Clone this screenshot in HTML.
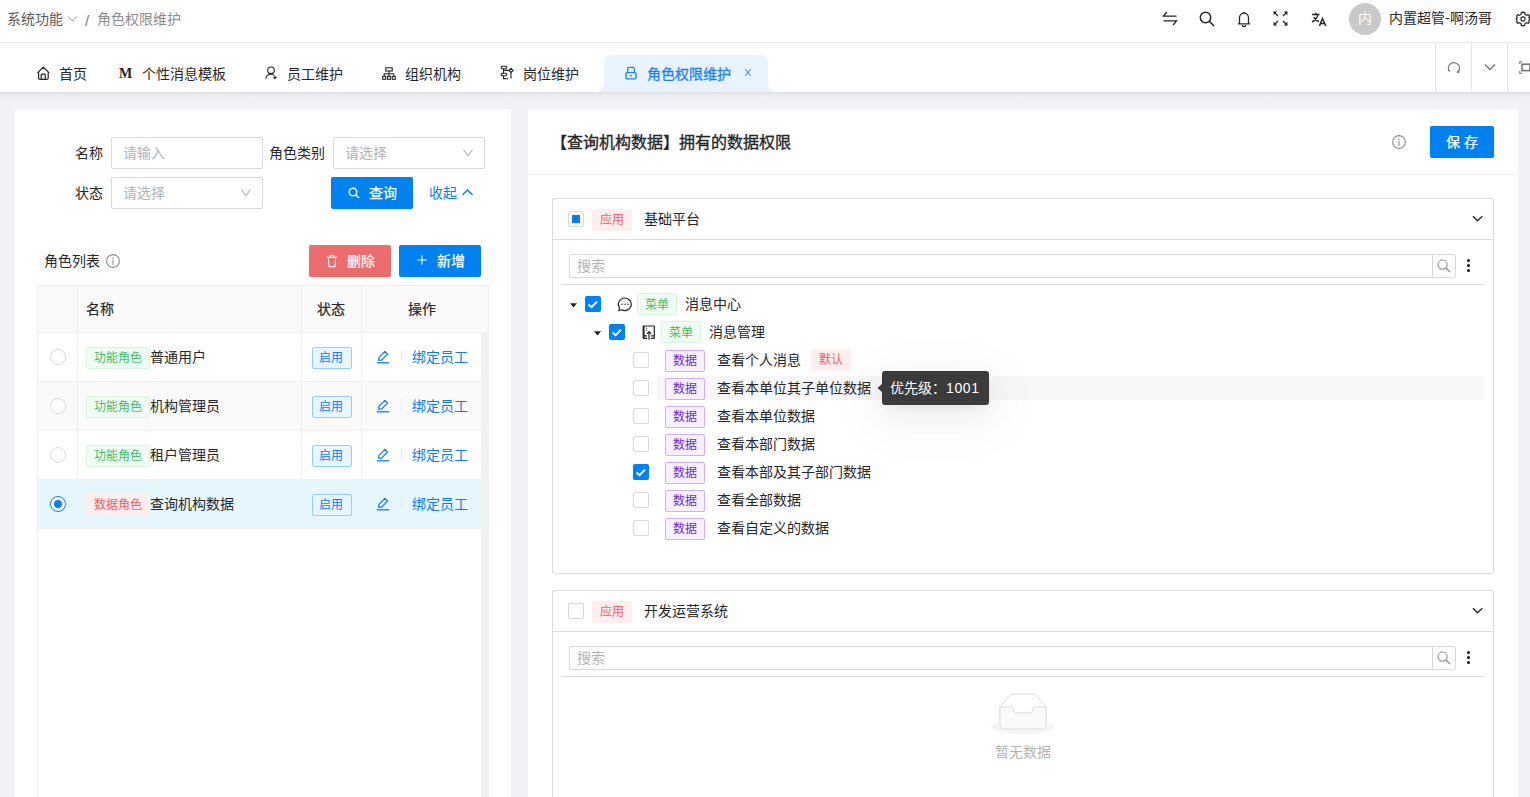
<!DOCTYPE html>
<html lang="zh-CN">
<head>
<meta charset="utf-8">
<style>
*{box-sizing:border-box;margin:0;padding:0}
html,body{width:1530px;height:797px;overflow:hidden}
body{position:relative;background:#f0f2f5;font-family:"Liberation Sans",sans-serif;font-size:14px;color:#262626}
.a{position:absolute}
.t{position:absolute;white-space:nowrap;line-height:20px;height:20px}
svg{display:block}
</style>
</head>
<body>
<!-- HEADER -->
<div class="a" style="left:0;top:0;width:1530px;height:43px;background:#fff;border-bottom:1px solid #ebebeb"></div>
<div class="t" style="left:7px;top:9px;color:#595959">系统功能</div>
<svg class="a" style="left:67px;top:15px" width="11" height="8" viewBox="0 0 11 8"><path d="M1.2 1.5 L5.5 6 L9.8 1.5" fill="none" stroke="#8c8c8c" stroke-width="0.9"/></svg>
<div class="t" style="left:85px;top:11px;color:#7a7a7a;font-size:15px">/</div>
<div class="t" style="left:97px;top:9px;color:#8c8c8c">角色权限维护</div>

<!-- header icons -->
<svg class="a" style="left:1162px;top:11px" width="16" height="15" viewBox="0 0 16 15"><path d="M4.8 1 L1.5 5.2 H14.5 M11.2 14 L14.5 9.8 H1.5" fill="none" stroke="#262626" stroke-width="1.3"/></svg>
<svg class="a" style="left:1199px;top:11px" width="16" height="16" viewBox="0 0 16 16"><circle cx="6.5" cy="6.5" r="5.2" fill="none" stroke="#262626" stroke-width="1.5"/><path d="M10.3 10.3 L15 15" stroke="#262626" stroke-width="1.5"/></svg>
<svg class="a" style="left:1237px;top:11px" width="14" height="16" viewBox="0 0 14 16"><path d="M2.5 12.5 V6.8 A4.5 4.8 0 0 1 11.5 6.8 V12.5 M0.8 12.8 H13.2 M5.3 14 A1.7 1.7 0 0 0 8.7 14" fill="none" stroke="#262626" stroke-width="1.3"/><path d="M7 1 V2" stroke="#262626" stroke-width="1.3"/></svg>
<svg class="a" style="left:1273px;top:11px" width="15" height="15" viewBox="0 0 15 15"><path d="M1 1 L5 5 M14 1 L10 5 M1 14 L5 10 M14 14 L10 10" fill="none" stroke="#262626" stroke-width="1.3"/><path d="M0.6 0.6 H4.2 L0.6 4.2 Z M14.4 0.6 H10.8 L14.4 4.2 Z M0.6 14.4 H4.2 L0.6 10.8 Z M14.4 14.4 H10.8 L14.4 10.8 Z" fill="#262626"/></svg>
<svg class="a" style="left:1311px;top:12px" width="16" height="15" viewBox="0 0 16 15"><path d="M1 2.5 H8.5 M4.8 0.8 V2.5 M7 2.5 C6 6 4 8.5 1 10 M2.8 5 C4 7.5 6 9 8 9.5" fill="none" stroke="#262626" stroke-width="1.4"/><path d="M8.5 14 L11.5 6.5 L14.8 14 M9.6 11.5 H13.6" fill="none" stroke="#262626" stroke-width="1.5"/></svg>
<div class="a" style="left:1349px;top:3px;width:32px;height:32px;border-radius:50%;background:#c8c8c8;color:#fff;text-align:center;line-height:31px;font-size:14px">内</div>
<div class="t" style="left:1389px;top:8px;color:#262626">内置超管-啊汤哥</div>
<svg class="a" style="left:1515px;top:11px" width="16" height="16" viewBox="0 0 16 16"><path d="M8 1.2 L9.6 1.6 L10 3.4 L11.6 4.3 L13.3 3.7 L14.4 5 L13.8 6.7 L14.8 8 L13.8 9.3 L14.4 11 L13.3 12.3 L11.6 11.7 L10 12.6 L9.6 14.4 L8 14.8 L6.4 14.4 L6 12.6 L4.4 11.7 L2.7 12.3 L1.6 11 L2.2 9.3 L1.2 8 L2.2 6.7 L1.6 5 L2.7 3.7 L4.4 4.3 L6 3.4 L6.4 1.6 Z" fill="none" stroke="#262626" stroke-width="1.2"/><circle cx="8" cy="8" r="2.1" fill="none" stroke="#262626" stroke-width="1.1"/></svg>

<!-- TAB BAR -->
<div class="a" style="left:0;top:43px;width:1530px;height:49px;background:#fff"></div>
<div class="a" style="left:0;top:92px;width:1530px;height:6px;background:linear-gradient(#dcdddf,#e6e8eb 40%,#f0f2f5)"></div>

<svg class="a" style="left:36px;top:66px" width="15" height="15" viewBox="0 0 15 15"><path d="M1.4 6.9 L7.3 1.2 L13.2 6.9 M2.6 6 V12.1 Q2.6 13.3 3.8 13.3 H11 Q12.2 13.3 12.2 12.1 V6 M5.2 13.3 V8.9 Q5.2 8.1 6 8.1 H8.5 Q9.3 8.1 9.3 8.9 V13.3" fill="none" stroke="#262626" stroke-width="1.2" stroke-linejoin="round"/></svg>
<div class="t" style="left:59px;top:64px">首页</div>
<div class="t" style="left:119px;top:64px;font-family:'Liberation Serif',serif;font-weight:bold;font-size:14px">M</div>
<div class="t" style="left:142px;top:64px">个性消息模板</div>
<svg class="a" style="left:264px;top:66px" width="14" height="15" viewBox="0 0 14 15"><circle cx="7" cy="4.3" r="3.3" fill="none" stroke="#262626" stroke-width="1.15"/><path d="M1.8 12.6 C2.2 9.6 4.2 8.2 7 8.2 C8.4 8.2 9.6 8.7 10.6 9.7 M11 9.9 V13.2 M9.4 11.6 H12.6" fill="none" stroke="#262626" stroke-width="1.15"/></svg>
<div class="t" style="left:287px;top:64px">员工维护</div>
<svg class="a" style="left:382px;top:67px" width="14" height="13" viewBox="0 0 14 13"><rect x="3.8" y="0.8" width="6.4" height="3.2" fill="none" stroke="#262626" stroke-width="1.1"/><path d="M7 4 V6.8 M2.2 9.5 V6.8 H11.8 V9.5 M7 6.8 V9.5" fill="none" stroke="#262626" stroke-width="1.1"/><rect x="0.7" y="9.4" width="3" height="2.9" fill="none" stroke="#262626" stroke-width="1.1"/><rect x="5.5" y="9.4" width="3" height="2.9" fill="none" stroke="#262626" stroke-width="1.1"/><rect x="10.3" y="9.4" width="3" height="2.9" fill="none" stroke="#262626" stroke-width="1.1"/></svg>
<div class="t" style="left:405px;top:64px">组织机构</div>
<svg class="a" style="left:500px;top:65px" width="15" height="16" viewBox="0 0 15 16"><rect x="1.2" y="1.2" width="5.6" height="2.6" rx="1.2" fill="none" stroke="#262626" stroke-width="1.1"/><rect x="1.2" y="8.2" width="5.6" height="2.6" rx="1.2" fill="none" stroke="#262626" stroke-width="1.1"/><path d="M3.5 3.8 V8.2 M3.5 10.8 V13.6 H6.6 M3.5 5.4 H8.9 M11 7.6 V11.8" fill="none" stroke="#262626" stroke-width="1.1"/><path d="M11 3.3 L13.1 5.4 L11 7.5 L8.9 5.4 Z" fill="none" stroke="#262626" stroke-width="1.1"/><path d="M11 11.4 L12.1 12.6 L11 13.8 L9.9 12.6 Z M7.4 12.5 L8.5 13.6 L7.4 14.7 L6.3 13.6 Z" fill="#555"/></svg>
<div class="t" style="left:523px;top:64px">岗位维护</div>

<!-- active tab -->
<svg class="a" style="left:595px;top:55px" width="182" height="37" viewBox="0 0 182 37"><path d="M0 37 C5 37 9 34 9 28 V8 C9 3.5 12.5 0 17 0 H165 C169.5 0 173 3.5 173 8 V28 C173 34 177 37 182 37 Z" fill="#e8f3fe"/></svg>
<svg class="a" style="left:624px;top:66px" width="14" height="14" viewBox="0 0 14 14"><path d="M3.6 6.6 V3.4 Q3.6 1.3 5.7 1.3 H8.3 Q10.4 1.3 10.4 3.4 V6.6" fill="none" stroke="#1a82f4" stroke-width="1.3"/><rect x="2" y="6.6" width="10" height="6.2" rx="1" fill="none" stroke="#1a82f4" stroke-width="1.3"/><path d="M7 9 V10.6" stroke="#1a82f4" stroke-width="1.6"/></svg>
<div class="t" style="left:647px;top:64px;color:#1a7ff3;-webkit-text-stroke:0.3px currentColor">角色权限维护</div>
<svg class="a" style="left:744px;top:68px" width="8" height="9" viewBox="0 0 8 9"><path d="M1.2 1.2 L6.6 7.9 M6.6 1.2 L1.2 7.9" stroke="#1a82f4" stroke-width="1"/></svg>

<!-- tab bar right tools -->
<div class="a" style="left:1435px;top:43px;width:1px;height:49px;background:#e5e5e5"></div>
<div class="a" style="left:1471px;top:43px;width:1px;height:49px;background:#e5e5e5"></div>
<div class="a" style="left:1507px;top:43px;width:1px;height:49px;background:#e5e5e5"></div>
<svg class="a" style="left:1447px;top:61px" width="14" height="13" viewBox="0 0 14 13"><path d="M2.5 10.5 A5.5 5.5 0 1 1 11.3 10.5" fill="none" stroke="#757575" stroke-width="1.3"/><path d="M9.8 11.2 L11.8 9.3 L12 11.8 Z" fill="#757575" stroke="#757575" stroke-width="0.8"/></svg>
<svg class="a" style="left:1484px;top:63px" width="12" height="8" viewBox="0 0 12 8"><path d="M1 1.5 L6 6.5 L11 1.5" fill="none" stroke="#757575" stroke-width="1.3"/></svg>
<svg class="a" style="left:1519px;top:61px" width="14" height="13" viewBox="0 0 14 13"><path d="M0.8 3 V0.8 H3 M0.8 10 V12.2 H3" fill="none" stroke="#757575" stroke-width="1.1"/><rect x="3" y="3.2" width="8" height="6.4" fill="none" stroke="#757575" stroke-width="1.6"/></svg>

<!-- LEFT PANEL -->
<div class="a" style="left:15px;top:109px;width:496px;height:700px;background:#fff"></div>
<div id="left">
<div class="t" style="left:75px;top:143px">名称</div>
<div class="a" style="left:111px;top:137px;width:152px;height:32px;border:1px solid #d9d9d9;border-radius:2px"></div>
<div class="t" style="left:123px;top:143px;color:#b3b3b3">请输入</div>
<div class="t" style="left:269px;top:143px">角色类别</div>
<div class="a" style="left:333px;top:137px;width:152px;height:32px;border:1px solid #d9d9d9;border-radius:2px"></div>
<div class="t" style="left:345px;top:143px;color:#b3b3b3">请选择</div>
<svg class="a" style="left:462px;top:148px" width="12" height="9" viewBox="0 0 12 9"><path d="M1.5 1.7 L6 7.5 L10.5 1.7" fill="none" stroke="#b3b3b3" stroke-width="1.1"/></svg>
<div class="t" style="left:75px;top:183px">状态</div>
<div class="a" style="left:111px;top:177px;width:152px;height:32px;border:1px solid #d9d9d9;border-radius:2px"></div>
<div class="t" style="left:123px;top:183px;color:#b3b3b3">请选择</div>
<svg class="a" style="left:240px;top:188px" width="12" height="9" viewBox="0 0 12 9"><path d="M1.5 1.7 L6 7.5 L10.5 1.7" fill="none" stroke="#b3b3b3" stroke-width="1.1"/></svg>
<div class="a" style="left:331px;top:177px;width:82px;height:32px;background:#0081f0;border-radius:2px;box-shadow:0 2px 0 rgba(0,0,0,.045)"></div>
<svg class="a" style="left:348px;top:187px" width="12" height="12" viewBox="0 0 12 12"><circle cx="5" cy="5" r="3.8" fill="none" stroke="#fff" stroke-width="1.4"/><path d="M7.8 7.8 L11 11" stroke="#fff" stroke-width="1.4"/></svg>
<div class="t" style="left:369px;top:183px;color:#fff;-webkit-text-stroke:0.25px #fff">查询</div>
<div class="t" style="left:429px;top:183px;color:#0a7ef0">收起</div>
<svg class="a" style="left:461px;top:188px" width="13" height="9" viewBox="0 0 13 9"><path d="M1.5 7 L6.5 2 L11.5 7" fill="none" stroke="#0a7ef0" stroke-width="1.4"/></svg>

<div class="t" style="left:44px;top:251px">角色列表</div>
<svg class="a" style="left:106px;top:254px" width="14" height="14" viewBox="0 0 14 14"><circle cx="7" cy="7" r="6.4" fill="none" stroke="#8c8c8c" stroke-width="1.1"/><circle cx="7" cy="4.2" r="0.8" fill="#8c8c8c"/><path d="M7 6 V10.8" stroke="#8c8c8c" stroke-width="1.1"/></svg>
<div class="a" style="left:309px;top:245px;width:82px;height:32px;background:#ec6b6c;border-radius:2px;box-shadow:0 2px 0 rgba(0,0,0,.045)"></div>
<svg class="a" style="left:326px;top:254px" width="12" height="14" viewBox="0 0 12 14"><path d="M1 3.2 H11 M4.2 3.2 V1.5 H7.8 V3.2 M2.4 3.2 L3 12.6 H9 L9.6 3.2" fill="none" stroke="#fff" stroke-width="1.1" stroke-linejoin="round"/></svg>
<div class="t" style="left:347px;top:251px;color:#fff;-webkit-text-stroke:0.25px #fff">删除</div>
<div class="a" style="left:399px;top:245px;width:82px;height:32px;background:#0081f0;border-radius:2px;box-shadow:0 2px 0 rgba(0,0,0,.045)"></div>
<svg class="a" style="left:416px;top:254px" width="12" height="12" viewBox="0 0 12 12"><path d="M6 1.2 V10.8 M1.2 6 H10.8" stroke="#fff" stroke-width="1.1"/></svg>
<div class="t" style="left:437px;top:251px;color:#fff;-webkit-text-stroke:0.25px #fff">新增</div>

<!-- table -->
<div class="a" style="left:37px;top:285px;width:452px;height:48px;background:#fafafa;border:1px solid #f0f0f0"></div>
<div class="a" style="left:37px;top:332px;width:1px;height:480px;background:#f0f0f0"></div>
<div class="a" style="left:481px;top:333px;width:8px;height:480px;background:#f1f1f1"></div>
<div class="a" style="left:77px;top:285px;width:1px;height:243px;background:#f0f0f0"></div>
<div class="a" style="left:301px;top:285px;width:1px;height:243px;background:#f0f0f0"></div>
<div class="a" style="left:361px;top:285px;width:1px;height:243px;background:#f0f0f0"></div>
<div class="t" style="left:86px;top:299px;-webkit-text-stroke:0.2px currentColor">名称</div>
<div class="t" style="left:317px;top:299px;-webkit-text-stroke:0.2px currentColor">状态</div>
<div class="t" style="left:408px;top:299px;-webkit-text-stroke:0.2px currentColor">操作</div>
<div class="a" style="left:38px;top:333px;width:443px;height:49px;background:#fff;border-bottom:1px solid #f0f0f0"></div>
<div class="a" style="left:77px;top:332px;width:1px;height:49px;background:#f0f0f0"></div>
<div class="a" style="left:301px;top:332px;width:1px;height:49px;background:#f0f0f0"></div>
<div class="a" style="left:361px;top:332px;width:1px;height:49px;background:#f0f0f0"></div>
<div class="a" style="left:50px;top:349px;width:16px;height:16px;border-radius:50%;border:1px solid #d9d9d9;background:#fff"></div>
<div class="a" style="left:86px;top:347px;width:64px;height:22px;border-radius:2px;background:#effcf3;border:1px solid #d5f5df"></div>
<div class="t" style="left:94px;top:348px;font-size:12px;color:#3fbf6a">功能角色</div>
<div class="t" style="left:150px;top:347px">普通用户</div>
<div class="a" style="left:312px;top:347px;width:40px;height:22px;border-radius:2px;background:#e7f6ff;border:1px solid #8fd0ff"></div>
<div class="t" style="left:319px;top:348px;font-size:12px;color:#0a7ef0">启用</div>
<svg class="a" style="left:376px;top:350px" width="14" height="14" viewBox="0 0 14 14"><path d="M2.6 10.2 L2.9 7.4 L8.9 1.4 L11.6 4.1 L5.6 10.1 Z" fill="none" stroke="#0a7ef0" stroke-width="1.3" stroke-linejoin="round"/><path d="M0.8 12.8 H13.2" stroke="#0a7ef0" stroke-width="1.3"/></svg>
<div class="a" style="left:401px;top:350px;width:1px;height:12px;background:#ececec"></div>
<div class="t" style="left:412px;top:347px;color:#0a7ef0">绑定员工</div>
<div class="a" style="left:38px;top:382px;width:443px;height:49px;background:#fafafa;border-bottom:1px solid #f0f0f0"></div>
<div class="a" style="left:77px;top:381px;width:1px;height:49px;background:#f0f0f0"></div>
<div class="a" style="left:301px;top:381px;width:1px;height:49px;background:#f0f0f0"></div>
<div class="a" style="left:361px;top:381px;width:1px;height:49px;background:#f0f0f0"></div>
<div class="a" style="left:50px;top:398px;width:16px;height:16px;border-radius:50%;border:1px solid #d9d9d9;background:#fff"></div>
<div class="a" style="left:86px;top:396px;width:64px;height:22px;border-radius:2px;background:#effcf3;border:1px solid #d5f5df"></div>
<div class="t" style="left:94px;top:397px;font-size:12px;color:#3fbf6a">功能角色</div>
<div class="t" style="left:150px;top:396px">机构管理员</div>
<div class="a" style="left:312px;top:396px;width:40px;height:22px;border-radius:2px;background:#e7f6ff;border:1px solid #8fd0ff"></div>
<div class="t" style="left:319px;top:397px;font-size:12px;color:#0a7ef0">启用</div>
<svg class="a" style="left:376px;top:399px" width="14" height="14" viewBox="0 0 14 14"><path d="M2.6 10.2 L2.9 7.4 L8.9 1.4 L11.6 4.1 L5.6 10.1 Z" fill="none" stroke="#0a7ef0" stroke-width="1.3" stroke-linejoin="round"/><path d="M0.8 12.8 H13.2" stroke="#0a7ef0" stroke-width="1.3"/></svg>
<div class="a" style="left:401px;top:399px;width:1px;height:12px;background:#ececec"></div>
<div class="t" style="left:412px;top:396px;color:#0a7ef0">绑定员工</div>
<div class="a" style="left:38px;top:431px;width:443px;height:49px;background:#fff;border-bottom:1px solid #f0f0f0"></div>
<div class="a" style="left:77px;top:430px;width:1px;height:49px;background:#f0f0f0"></div>
<div class="a" style="left:301px;top:430px;width:1px;height:49px;background:#f0f0f0"></div>
<div class="a" style="left:361px;top:430px;width:1px;height:49px;background:#f0f0f0"></div>
<div class="a" style="left:50px;top:447px;width:16px;height:16px;border-radius:50%;border:1px solid #d9d9d9;background:#fff"></div>
<div class="a" style="left:86px;top:445px;width:64px;height:22px;border-radius:2px;background:#effcf3;border:1px solid #d5f5df"></div>
<div class="t" style="left:94px;top:446px;font-size:12px;color:#3fbf6a">功能角色</div>
<div class="t" style="left:150px;top:445px">租户管理员</div>
<div class="a" style="left:312px;top:445px;width:40px;height:22px;border-radius:2px;background:#e7f6ff;border:1px solid #8fd0ff"></div>
<div class="t" style="left:319px;top:446px;font-size:12px;color:#0a7ef0">启用</div>
<svg class="a" style="left:376px;top:448px" width="14" height="14" viewBox="0 0 14 14"><path d="M2.6 10.2 L2.9 7.4 L8.9 1.4 L11.6 4.1 L5.6 10.1 Z" fill="none" stroke="#0a7ef0" stroke-width="1.3" stroke-linejoin="round"/><path d="M0.8 12.8 H13.2" stroke="#0a7ef0" stroke-width="1.3"/></svg>
<div class="a" style="left:401px;top:448px;width:1px;height:12px;background:#ececec"></div>
<div class="t" style="left:412px;top:445px;color:#0a7ef0">绑定员工</div>
<div class="a" style="left:38px;top:480px;width:443px;height:49px;background:#e6f6fd;border-bottom:1px solid #f0f0f0"></div>
<div class="a" style="left:77px;top:479px;width:1px;height:49px;background:#f0f0f0"></div>
<div class="a" style="left:301px;top:479px;width:1px;height:49px;background:#f0f0f0"></div>
<div class="a" style="left:361px;top:479px;width:1px;height:49px;background:#f0f0f0"></div>
<div class="a" style="left:50px;top:496px;width:16px;height:16px;border-radius:50%;border:1px solid #0081f0;background:#fff"></div>
<div class="a" style="left:54px;top:500px;width:8px;height:8px;border-radius:50%;background:#0081f0"></div>
<div class="a" style="left:86px;top:494px;width:64px;height:22px;border-radius:2px;background:#feeeee"></div>
<div class="t" style="left:94px;top:495px;font-size:12px;color:#eb6262">数据角色</div>
<div class="t" style="left:150px;top:494px">查询机构数据</div>
<div class="a" style="left:312px;top:494px;width:40px;height:22px;border-radius:2px;background:#e7f6ff;border:1px solid #8fd0ff"></div>
<div class="t" style="left:319px;top:495px;font-size:12px;color:#0a7ef0">启用</div>
<svg class="a" style="left:376px;top:497px" width="14" height="14" viewBox="0 0 14 14"><path d="M2.6 10.2 L2.9 7.4 L8.9 1.4 L11.6 4.1 L5.6 10.1 Z" fill="none" stroke="#0a7ef0" stroke-width="1.3" stroke-linejoin="round"/><path d="M0.8 12.8 H13.2" stroke="#0a7ef0" stroke-width="1.3"/></svg>
<div class="a" style="left:401px;top:497px;width:1px;height:12px;background:#ececec"></div>
<div class="t" style="left:412px;top:494px;color:#0a7ef0">绑定员工</div>
</div>

<!-- RIGHT PANEL -->
<div class="a" style="left:528px;top:109px;width:990px;height:700px;background:#fff"></div>
<div id="right">
<div class="t" style="left:551px;top:132px;font-size:16px;line-height:22px;height:22px;-webkit-text-stroke:0.35px currentColor">【查询机构数据】拥有的数据权限</div>
<svg class="a" style="left:1392px;top:135px" width="14" height="14" viewBox="0 0 14 14"><circle cx="7" cy="7" r="6.4" fill="none" stroke="#8c8c8c" stroke-width="1.1"/><circle cx="7" cy="4.2" r="0.8" fill="#8c8c8c"/><path d="M7 6 V10.8" stroke="#8c8c8c" stroke-width="1.1"/></svg>
<div class="a" style="left:1430px;top:126px;width:64px;height:32px;background:#0081f0;border-radius:2px;box-shadow:0 2px 0 rgba(0,0,0,.04)"></div>
<div class="t" style="left:1446px;top:132px;color:#fff;letter-spacing:4px;-webkit-text-stroke:0.25px #fff">保存</div>
<div class="a" style="left:528px;top:174px;width:990px;height:1px;background:#eeeeee"></div>
<div class="a" style="left:552px;top:198px;width:942px;height:376px;border:1px solid #dcdcdc;border-radius:2px"></div>
<div class="a" style="left:552px;top:198px;width:942px;height:42px;border:1px solid #dcdcdc;border-radius:2px 2px 0 0"></div>
<div class="a" style="left:568px;top:211px;width:16px;height:16px;border:1px solid #d9d9d9;border-radius:2px;background:#fff"></div>
<div class="a" style="left:572px;top:215px;width:8px;height:8px;background:#0081f0"></div>
<div class="a" style="left:592px;top:209px;width:40px;height:22px;border-radius:2px;background:#feeeee"></div>
<div class="t" style="left:600px;top:210px;font-size:12px;color:#eb6262">应用</div>
<div class="t" style="left:644px;top:209px">基础平台</div>
<svg class="a" style="left:1471px;top:215px" width="13" height="8" viewBox="0 0 13 8"><path d="M2 1.3 L6.4 5.8 L11.4 1.3" fill="none" stroke="#262626" stroke-width="1.4"/></svg>
<div class="a" style="left:569px;top:254px;width:887px;height:24px;border:1px solid #d9d9d9;border-radius:2px"></div>
<div class="a" style="left:1432px;top:254px;width:1px;height:24px;background:#d9d9d9"></div>
<div class="t" style="left:577px;top:256px;color:#b3b3b3">搜索</div>
<svg class="a" style="left:1437px;top:259px" width="14" height="14" viewBox="0 0 14 14"><circle cx="5.6" cy="5.6" r="4.6" fill="none" stroke="#8c8c8c" stroke-width="1.1"/><path d="M9 9 L13 13" stroke="#8c8c8c" stroke-width="1.2"/></svg>
<div class="a" style="left:1467px;top:259px;width:3.4px;height:3.4px;border-radius:50%;background:#111"></div>
<div class="a" style="left:1467px;top:264px;width:3.4px;height:3.4px;border-radius:50%;background:#111"></div>
<div class="a" style="left:1467px;top:269px;width:3.4px;height:3.4px;border-radius:50%;background:#111"></div>
<div class="a" style="left:561px;top:284px;width:924px;height:1px;background:#dcdcdc"></div>
<div class="a" style="left:552px;top:590px;width:942px;height:240px;border:1px solid #dcdcdc;border-radius:2px"></div>
<div class="a" style="left:552px;top:590px;width:942px;height:42px;border:1px solid #dcdcdc;border-radius:2px 2px 0 0"></div>
<div class="a" style="left:568px;top:603px;width:16px;height:16px;border:1px solid #d9d9d9;border-radius:2px;background:#fff"></div>
<div class="a" style="left:592px;top:601px;width:40px;height:22px;border-radius:2px;background:#feeeee"></div>
<div class="t" style="left:600px;top:602px;font-size:12px;color:#eb6262">应用</div>
<div class="t" style="left:644px;top:601px">开发运营系统</div>
<svg class="a" style="left:1471px;top:607px" width="13" height="8" viewBox="0 0 13 8"><path d="M2 1.3 L6.4 5.8 L11.4 1.3" fill="none" stroke="#262626" stroke-width="1.4"/></svg>
<div class="a" style="left:569px;top:646px;width:887px;height:24px;border:1px solid #d9d9d9;border-radius:2px"></div>
<div class="a" style="left:1432px;top:646px;width:1px;height:24px;background:#d9d9d9"></div>
<div class="t" style="left:577px;top:648px;color:#b3b3b3">搜索</div>
<svg class="a" style="left:1437px;top:651px" width="14" height="14" viewBox="0 0 14 14"><circle cx="5.6" cy="5.6" r="4.6" fill="none" stroke="#8c8c8c" stroke-width="1.1"/><path d="M9 9 L13 13" stroke="#8c8c8c" stroke-width="1.2"/></svg>
<div class="a" style="left:1467px;top:651px;width:3.4px;height:3.4px;border-radius:50%;background:#111"></div>
<div class="a" style="left:1467px;top:656px;width:3.4px;height:3.4px;border-radius:50%;background:#111"></div>
<div class="a" style="left:1467px;top:661px;width:3.4px;height:3.4px;border-radius:50%;background:#111"></div>
<div class="a" style="left:561px;top:676px;width:924px;height:1px;background:#dcdcdc"></div>
<svg class="a" style="left:570px;top:303px" width="7" height="5" viewBox="0 0 7 5"><path d="M0 0.2 H7 L3.5 4.6 Z" fill="#262626"/></svg>
<div class="a" style="left:585px;top:296px;width:16px;height:16px;border-radius:2px;background:#0081f0"></div><svg class="a" style="left:585px;top:296px" width="16" height="16" viewBox="0 0 16 16"><path d="M3.6 8.4 L6.6 11.2 L12 5.6" fill="none" stroke="#fff" stroke-width="2"/></svg>
<svg class="a" style="left:617px;top:297px" width="16" height="15" viewBox="0 0 16 15"><path d="M8 1 A6.5 6.3 0 1 1 4.6 12.8 L1.8 13.7 L2.5 10.8 A6.5 6.3 0 0 1 8 1 Z" fill="none" stroke="#262626" stroke-width="1.2" stroke-linejoin="round"/><circle cx="5" cy="7.3" r="0.75" fill="#262626"/><circle cx="8" cy="7.3" r="0.75" fill="#262626"/><circle cx="11" cy="7.3" r="0.75" fill="#262626"/></svg>
<div class="a" style="left:637px;top:293px;width:40px;height:22px;border-radius:2px;background:#effcf3;border:1px solid #d5f5df"></div><div class="t" style="left:645px;top:295px;font-size:12px;color:#3fbf6a">菜单</div>
<div class="t" style="left:685px;top:294px">消息中心</div>
<svg class="a" style="left:594px;top:331px" width="7" height="5" viewBox="0 0 7 5"><path d="M0 0.2 H7 L3.5 4.6 Z" fill="#262626"/></svg>
<div class="a" style="left:609px;top:324px;width:16px;height:16px;border-radius:2px;background:#0081f0"></div><svg class="a" style="left:609px;top:324px" width="16" height="16" viewBox="0 0 16 16"><path d="M3.6 8.4 L6.6 11.2 L12 5.6" fill="none" stroke="#fff" stroke-width="2"/></svg>
<svg class="a" style="left:642px;top:325px" width="14" height="15" viewBox="0 0 14 15"><path d="M5.2 13.3 H1.5 V1 H12.3 V13.3 H8.8 M1.5 10.8 H5 M9 10.8 H12.3" fill="none" stroke="#262626" stroke-width="1.2" stroke-linejoin="round"/><path d="M1.6 1 V13.3" stroke="#262626" stroke-width="1.9"/><path d="M7 14.8 V6.6 M4.9 8.8 L7 6.6 L9.1 8.8" fill="none" stroke="#262626" stroke-width="1.2"/><circle cx="4.4" cy="3.2" r="0.6" fill="#262626"/><circle cx="4.4" cy="5.3" r="0.6" fill="#262626"/></svg>
<div class="a" style="left:661px;top:321px;width:40px;height:22px;border-radius:2px;background:#effcf3;border:1px solid #d5f5df"></div><div class="t" style="left:669px;top:323px;font-size:12px;color:#3fbf6a">菜单</div>
<div class="t" style="left:709px;top:322px">消息管理</div>
<div class="a" style="left:657px;top:376px;width:827px;height:24px;background:#f7f7f7"></div>
<div class="a" style="left:633px;top:352px;width:16px;height:16px;border-radius:2px;border:1px solid #d9d9d9;background:#fff"></div>
<div class="a" style="left:665px;top:350px;width:40px;height:22px;border-radius:2px;background:#f9f0ff;border:1px solid #d3adf7"></div><div class="t" style="left:673px;top:351px;font-size:12px;color:#6b2bc4">数据</div>
<div class="t" style="left:717px;top:350px">查看个人消息</div>
<div class="a" style="left:633px;top:380px;width:16px;height:16px;border-radius:2px;border:1px solid #d9d9d9;background:#fff"></div>
<div class="a" style="left:665px;top:378px;width:40px;height:22px;border-radius:2px;background:#f9f0ff;border:1px solid #d3adf7"></div><div class="t" style="left:673px;top:379px;font-size:12px;color:#6b2bc4">数据</div>
<div class="t" style="left:717px;top:378px">查看本单位其子单位数据</div>
<div class="a" style="left:633px;top:408px;width:16px;height:16px;border-radius:2px;border:1px solid #d9d9d9;background:#fff"></div>
<div class="a" style="left:665px;top:406px;width:40px;height:22px;border-radius:2px;background:#f9f0ff;border:1px solid #d3adf7"></div><div class="t" style="left:673px;top:407px;font-size:12px;color:#6b2bc4">数据</div>
<div class="t" style="left:717px;top:406px">查看本单位数据</div>
<div class="a" style="left:633px;top:436px;width:16px;height:16px;border-radius:2px;border:1px solid #d9d9d9;background:#fff"></div>
<div class="a" style="left:665px;top:434px;width:40px;height:22px;border-radius:2px;background:#f9f0ff;border:1px solid #d3adf7"></div><div class="t" style="left:673px;top:435px;font-size:12px;color:#6b2bc4">数据</div>
<div class="t" style="left:717px;top:434px">查看本部门数据</div>
<div class="a" style="left:633px;top:464px;width:16px;height:16px;border-radius:2px;background:#0081f0"></div><svg class="a" style="left:633px;top:464px" width="16" height="16" viewBox="0 0 16 16"><path d="M3.6 8.4 L6.6 11.2 L12 5.6" fill="none" stroke="#fff" stroke-width="2"/></svg>
<div class="a" style="left:665px;top:462px;width:40px;height:22px;border-radius:2px;background:#f9f0ff;border:1px solid #d3adf7"></div><div class="t" style="left:673px;top:463px;font-size:12px;color:#6b2bc4">数据</div>
<div class="t" style="left:717px;top:462px">查看本部及其子部门数据</div>
<div class="a" style="left:633px;top:492px;width:16px;height:16px;border-radius:2px;border:1px solid #d9d9d9;background:#fff"></div>
<div class="a" style="left:665px;top:490px;width:40px;height:22px;border-radius:2px;background:#f9f0ff;border:1px solid #d3adf7"></div><div class="t" style="left:673px;top:491px;font-size:12px;color:#6b2bc4">数据</div>
<div class="t" style="left:717px;top:490px">查看全部数据</div>
<div class="a" style="left:633px;top:520px;width:16px;height:16px;border-radius:2px;border:1px solid #d9d9d9;background:#fff"></div>
<div class="a" style="left:665px;top:518px;width:40px;height:22px;border-radius:2px;background:#f9f0ff;border:1px solid #d3adf7"></div><div class="t" style="left:673px;top:519px;font-size:12px;color:#6b2bc4">数据</div>
<div class="t" style="left:717px;top:518px">查看自定义的数据</div>
<div class="a" style="left:811px;top:349px;width:40px;height:22px;border-radius:2px;background:#feeeee"></div><div class="t" style="left:819px;top:350px;font-size:12px;color:#eb6262">默认</div>
<div class="a" style="left:882px;top:371px;width:107px;height:34px;border-radius:3px;background:#3b3b3b;box-shadow:0 6px 16px -8px rgba(0,0,0,.08),0 9px 28px 0 rgba(0,0,0,.05),0 12px 48px 16px rgba(0,0,0,.03)"></div>
<svg class="a" style="left:877px;top:383px" width="6" height="10" viewBox="0 0 6 10"><path d="M6 0 L0.5 5 L6 10 Z" fill="#3b3b3b"/></svg>
<div class="t" style="left:890px;top:378px;color:#fff;font-size:14px">优先级：<span style="letter-spacing:0.6px">1001</span></div>
<svg class="a" style="left:991px;top:693px" width="64" height="41" viewBox="0 0 64 41"><g transform="translate(0 1)" fill="none" fill-rule="evenodd"><ellipse fill="#f5f5f5" cx="32" cy="33" rx="32" ry="7"/><g fill-rule="nonzero" stroke="#d9d9d9"><path d="M55 12.76L44.854 1.258C44.367.474 43.656 0 42.907 0H21.093c-.749 0-1.46.474-1.947 1.257L9 12.761V22h46v-9.24z"/><path d="M41.613 15.931c0-1.605.994-2.93 2.227-2.931H55v18.137C55 33.26 53.68 35 52.05 35h-40.1C10.32 35 9 33.259 9 31.137V13h11.16c1.233 0 2.227 1.323 2.227 2.928v.022c0 1.605 1.005 2.901 2.237 2.901h14.752c1.232 0 2.237-1.308 2.237-2.913v-.007z" fill="#fafafa"/></g></g></svg>
<div class="t" style="left:995px;top:742px;color:#b3b3b3">暂无数据</div>
</div>

</body>
</html>
